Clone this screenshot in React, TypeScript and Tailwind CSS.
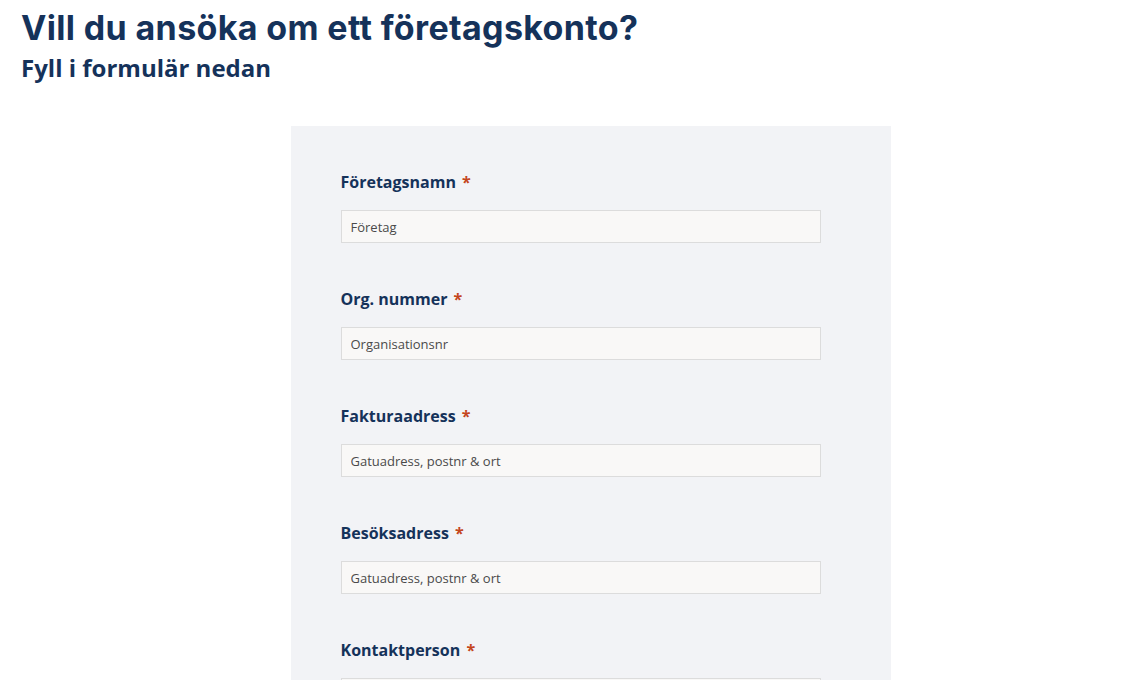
import React from 'react';

const fields = [
    { label: 'Företagsnamn', placeholder: 'Företag' },
    { label: 'Org. nummer', placeholder: 'Organisationsnr' },
    { label: 'Fakturaadress', placeholder: 'Gatuadress, postnr & ort' },
    { label: 'Besöksadress', placeholder: 'Gatuadress, postnr & ort' },
    { label: 'Kontaktperson', placeholder: 'Namn' },
];

export default function App() {
    return (
        <div className="min-h-screen bg-white text-[#15325a] overflow-hidden h-[680px]">
            {/* Heading */}
            <div className="pl-[21px] pt-[6px]">
                <h1
                    className="text-[34px] leading-[44px] font-bold tracking-[0.35px]"
                    style={{ fontFamily: 'Inter, "Open Sans", sans-serif' }}
                >
                    Vill du ansöka om ett företagskonto?
                </h1>
                <h2
                    className="text-[24px] leading-[32px] font-bold mt-[2px]"
                    style={{ fontFamily: '"Open Sans", sans-serif' }}
                >
                    Fyll i formulär nedan
                </h2>
            </div>

            {/* Form panel */}
            <div className="flex justify-center mt-[42px]">
                <form
                    className="w-[600px] ml-[35px] bg-[#f2f3f6] px-[50px] pt-[44px] flex flex-col gap-[44px]"
                    style={{ fontFamily: '"Open Sans", sans-serif' }}
                >
                    {fields.map((f) => (
                        <div key={f.label} className="flex flex-col gap-[16px]">
                            <label className="text-[16px] leading-[24px] font-bold text-[#15325a]">
                                {f.label} <span className="text-[#c4451c] ml-[2px]">*</span>
                            </label>
                            <input
                                type="text"
                                placeholder={f.placeholder}
                                className="w-[480px] h-[33px] bg-[#f9f8f7] border border-[#dcdcdc] px-[9px] text-[13px] text-[#444] placeholder:text-[#4a4a4a] outline-none"
                            />
                        </div>
                    ))}
                </form>
            </div>
        </div>
    );
}
